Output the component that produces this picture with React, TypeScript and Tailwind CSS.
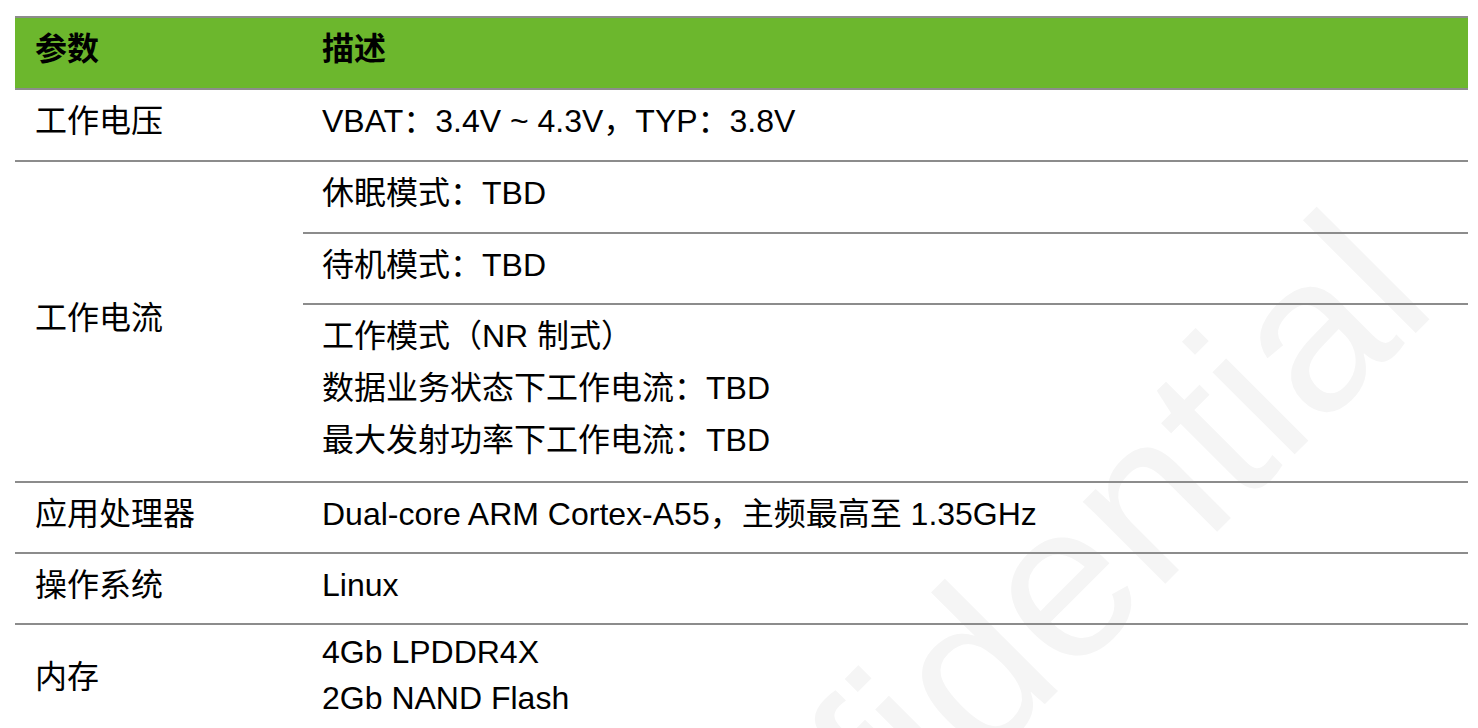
import React from 'react'

const font = "font-['Liberation_Sans','Noto_Sans_CJK_SC',sans-serif]"

type RowProps = {
  label: React.ReactNode
  children: React.ReactNode
  h: string
}

const Row = ({ label, children, h }: RowProps) => (
  <div className={`grid grid-cols-[288px_1fr] border-b-2 border-[#8c8c8c] ${h}`}>
    <div className="flex items-center pb-[8px] pl-[20px]">{label}</div>
    <div className="flex items-center pb-[8px] pl-[19px]">{children}</div>
  </div>
)

const App = () => {
  return (
    <div className={`relative h-[728px] w-[1478px] overflow-hidden bg-white text-[32px] text-black ${font}`}>
      {/* watermark */}
      <div className="pointer-events-none absolute left-[1440px] top-[309px]">
        <span className="absolute right-0 top-[-186px] origin-[100%_186px] -rotate-45 whitespace-nowrap text-[220px] leading-none text-[#f5f5f5]">
          Confidential
        </span>
      </div>

      <div className="relative ml-[15px] mr-[10px] pt-[16px] leading-[52px]">
        {/* header */}
        <div className="grid h-[74px] grid-cols-[288px_1fr] border-y-2 border-[#8c8c8c] bg-[#6cb72d] font-bold">
          <div className="flex items-center pb-[8px] pl-[20px]">参数</div>
          <div className="flex items-center pb-[8px] pl-[19px]">描述</div>
        </div>

        <Row label="工作电压" h="h-[72px]">
          VBAT：3.4V ~ 4.3V，TYP：3.8V
        </Row>

        <div className="grid grid-cols-[288px_1fr] border-b-2 border-[#8c8c8c]">
          <div className="flex items-center pb-[8px] pl-[20px]">工作电流</div>
          <div className="flex flex-col">
            <div className="flex h-[72px] items-center border-b-2 border-[#8c8c8c] pb-[8px] pl-[19px]">休眠模式：TBD</div>
            <div className="flex h-[71px] items-center border-b-2 border-[#8c8c8c] pb-[8px] pl-[19px]">待机模式：TBD</div>
            <div className="flex h-[176px] flex-col justify-center pb-[10px] pl-[19px]">
              <div>工作模式（NR 制式）</div>
              <div>数据业务状态下工作电流：TBD</div>
              <div>最大发射功率下工作电流：TBD</div>
            </div>
          </div>
        </div>

        <Row label="应用处理器" h="h-[71px]">
          Dual-core ARM Cortex-A55，主频最高至 1.35GHz
        </Row>

        <Row label="操作系统" h="h-[71px]">
          Linux
        </Row>

        <div className="grid h-[100px] grid-cols-[288px_1fr]">
          <div className="flex items-center pt-[4px] pl-[20px]">内存</div>
          <div className="flex flex-col justify-center pl-[19px] leading-[46px]">
            <div>4Gb LPDDR4X</div>
            <div>2Gb NAND Flash</div>
          </div>
        </div>
      </div>
    </div>
  )
}

export default App
